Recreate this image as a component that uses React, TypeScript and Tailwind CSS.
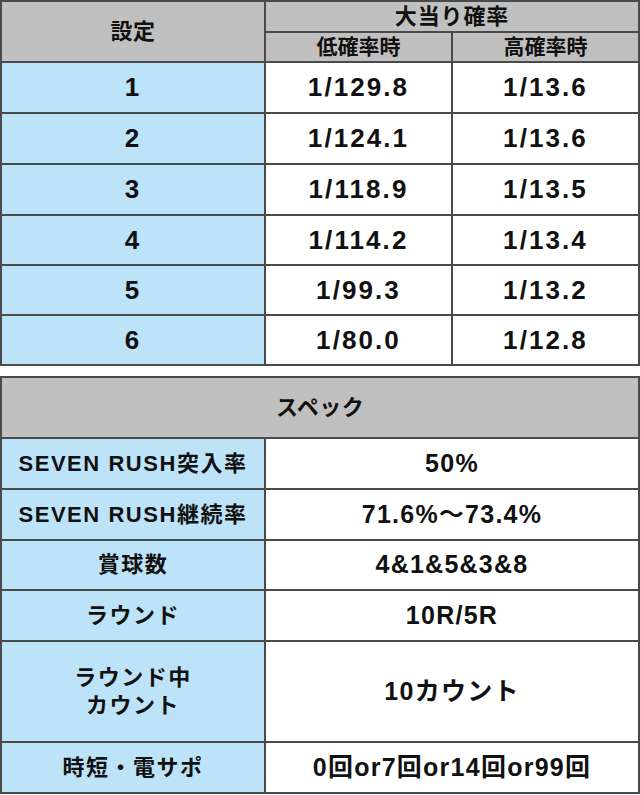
const font = { fontFamily: '"Liberation Sans", "Noto Sans CJK JP", sans-serif' };

const rates = [
  { s: '1', low: '1/129.8', high: '1/13.6' },
  { s: '2', low: '1/124.1', high: '1/13.6' },
  { s: '3', low: '1/118.9', high: '1/13.5' },
  { s: '4', low: '1/114.2', high: '1/13.4' },
  { s: '5', low: '1/99.3', high: '1/13.2' },
  { s: '6', low: '1/80.0', high: '1/12.8' },
];

const specs = [
  { label: 'SEVEN RUSH突入率', value: '50%' },
  { label: 'SEVEN RUSH継続率', value: '71.6%～73.4%' },
  { label: '賞球数', value: '4&1&5&3&8' },
  { label: 'ラウンド', value: '10R/5R' },
  { label: 'ラウンド中\nカウント', value: '10カウント' },
  { label: '時短・電サポ', value: '0回or7回or14回or99回' },
];

const cell = 'flex items-center justify-center text-center font-bold text-[#111]';

export default function App() {
  return (
    <div className="w-[640px] bg-white" style={font}>
      <div className="grid grid-cols-[262px_185px_185px] grid-rows-[29px_28px_49px_49px_49px_48px_48px_48px] gap-[2px] border-2 border-[#4a4a4a] bg-[#4a4a4a]">
        <div className={`${cell} row-span-2 bg-[#c0c0c0] text-[22px] tracking-[0.02em]`}>設定</div>
        <div className={`${cell} col-span-2 bg-[#c0c0c0] text-[22px] tracking-[0.04em]`}>大当り確率</div>
        <div className={`${cell} bg-[#c0c0c0] text-[21px]`}>低確率時</div>
        <div className={`${cell} bg-[#c0c0c0] text-[21px]`}>高確率時</div>
        {rates.map((r) => (
          <>
            <div key={r.s + 'a'} className={`${cell} bg-[#bde3f8] text-[26px] tracking-[0.08em]`}>{r.s}</div>
            <div key={r.s + 'b'} className={`${cell} bg-white text-[26px] tracking-[0.08em]`}>{r.low}</div>
            <div key={r.s + 'c'} className={`${cell} bg-white text-[26px] tracking-[0.08em]`}>{r.high}</div>
          </>
        ))}
      </div>

      <div className="mt-[10px] grid grid-cols-[262px_372px] grid-rows-[59px_49px_49px_48px_49px_99px_49px] gap-[2px] border-2 border-[#4a4a4a] bg-[#4a4a4a]">
        <div className={`${cell} col-span-2 bg-[#c0c0c0] text-[22px] tracking-[0.02em]`}>スペック</div>
        {specs.map((sp) => (
          <>
            <div key={sp.label + 'a'} className={`${cell} whitespace-pre-line bg-[#bde3f8] text-[22px] leading-[28px] tracking-[0.07em]`}>
              {sp.label}
            </div>
            <div key={sp.label + 'b'} className={`${cell} bg-white text-[25px] tracking-[0.05em]`}>{sp.value}</div>
          </>
        ))}
      </div>
    </div>
  );
}
